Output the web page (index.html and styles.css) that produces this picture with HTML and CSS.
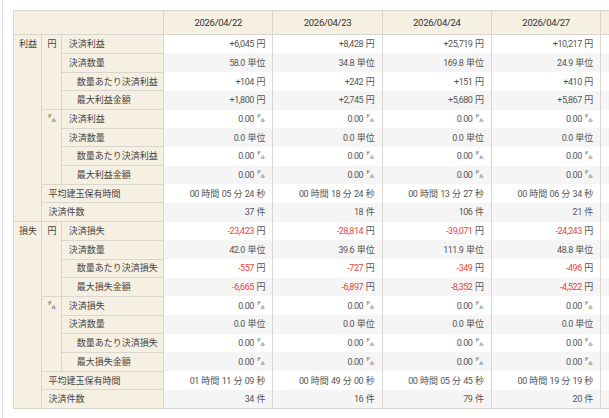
FILE: index.html
```html
<!DOCTYPE html>
<html lang="ja">
<head>
<meta charset="utf-8">
<title>決済集計</title>
<link rel="stylesheet" href="styles.css">
</head>
<body>
<div class="page">
<div class="scroller">
<table class="stats">
<colgroup>
<col class="c-sec"><col class="c-cur"><col class="c-lbl">
<col class="c-day"><col class="c-day"><col class="c-day"><col class="c-day"><col class="c-day">
</colgroup>
<thead>
<tr>
<th colspan="3" class="corner"></th>
<th>2026/04/22</th><th>2026/04/23</th><th>2026/04/24</th><th>2026/04/27</th><th></th>
</tr>
</thead>
<tbody>
<tr class="odd">
<th rowspan="10" class="sec">利益</th>
<th rowspan="4" class="cur">円</th>
<th class="lbl">決済利益</th>
<td>+6,045<span class="u">円</span></td><td>+8,428<span class="u">円</span></td><td>+25,719<span class="u">円</span></td><td>+10,217<span class="u">円</span></td><td></td>
</tr>
<tr class="even">
<th class="lbl">決済数量</th>
<td>58.0<span class="u">単位</span></td><td>34.8<span class="u">単位</span></td><td>169.8<span class="u">単位</span></td><td>24.9<span class="u">単位</span></td><td></td>
</tr>
<tr class="odd">
<th class="lbl sub">数量あたり決済利益</th>
<td>+104<span class="u">円</span></td><td>+242<span class="u">円</span></td><td>+151<span class="u">円</span></td><td>+410<span class="u">円</span></td><td></td>
</tr>
<tr class="even">
<th class="lbl sub">最大利益金額</th>
<td>+1,800<span class="u">円</span></td><td>+2,745<span class="u">円</span></td><td>+5,680<span class="u">円</span></td><td>+5,867<span class="u">円</span></td><td></td>
</tr>
<tr class="odd">
<th rowspan="4" class="cur">㌦</th>
<th class="lbl">決済利益</th>
<td>0.00<span class="u">㌦</span></td><td>0.00<span class="u">㌦</span></td><td>0.00<span class="u">㌦</span></td><td>0.00<span class="u">㌦</span></td><td></td>
</tr>
<tr class="even">
<th class="lbl">決済数量</th>
<td>0.0<span class="u">単位</span></td><td>0.0<span class="u">単位</span></td><td>0.0<span class="u">単位</span></td><td>0.0<span class="u">単位</span></td><td></td>
</tr>
<tr class="odd">
<th class="lbl sub">数量あたり決済利益</th>
<td>0.00<span class="u">㌦</span></td><td>0.00<span class="u">㌦</span></td><td>0.00<span class="u">㌦</span></td><td>0.00<span class="u">㌦</span></td><td></td>
</tr>
<tr class="even">
<th class="lbl sub">最大利益金額</th>
<td>0.00<span class="u">㌦</span></td><td>0.00<span class="u">㌦</span></td><td>0.00<span class="u">㌦</span></td><td>0.00<span class="u">㌦</span></td><td></td>
</tr>
<tr class="odd">
<th colspan="2" class="lbl">平均建玉保有時間</th>
<td>00<span class="u">時間</span> 05<span class="u">分</span> 24<span class="u">秒</span></td><td>00<span class="u">時間</span> 18<span class="u">分</span> 24<span class="u">秒</span></td><td>00<span class="u">時間</span> 13<span class="u">分</span> 27<span class="u">秒</span></td><td>00<span class="u">時間</span> 06<span class="u">分</span> 34<span class="u">秒</span></td><td></td>
</tr>
<tr class="even">
<th colspan="2" class="lbl">決済件数</th>
<td>37<span class="u">件</span></td><td>18<span class="u">件</span></td><td>106<span class="u">件</span></td><td>21<span class="u">件</span></td><td></td>
</tr>

<tr class="odd">
<th rowspan="10" class="sec">損失</th>
<th rowspan="4" class="cur">円</th>
<th class="lbl">決済損失</th>
<td><span class="neg">-23,423</span><span class="u">円</span></td><td><span class="neg">-28,814</span><span class="u">円</span></td><td><span class="neg">-39,071</span><span class="u">円</span></td><td><span class="neg">-24,243</span><span class="u">円</span></td><td></td>
</tr>
<tr class="even">
<th class="lbl">決済数量</th>
<td>42.0<span class="u">単位</span></td><td>39.6<span class="u">単位</span></td><td>111.9<span class="u">単位</span></td><td>48.8<span class="u">単位</span></td><td></td>
</tr>
<tr class="odd">
<th class="lbl sub">数量あたり決済損失</th>
<td><span class="neg">-557</span><span class="u">円</span></td><td><span class="neg">-727</span><span class="u">円</span></td><td><span class="neg">-349</span><span class="u">円</span></td><td><span class="neg">-496</span><span class="u">円</span></td><td></td>
</tr>
<tr class="even">
<th class="lbl sub">最大損失金額</th>
<td><span class="neg">-6,665</span><span class="u">円</span></td><td><span class="neg">-6,897</span><span class="u">円</span></td><td><span class="neg">-8,352</span><span class="u">円</span></td><td><span class="neg">-4,522</span><span class="u">円</span></td><td></td>
</tr>
<tr class="odd">
<th rowspan="4" class="cur">㌦</th>
<th class="lbl">決済損失</th>
<td>0.00<span class="u">㌦</span></td><td>0.00<span class="u">㌦</span></td><td>0.00<span class="u">㌦</span></td><td>0.00<span class="u">㌦</span></td><td></td>
</tr>
<tr class="even">
<th class="lbl">決済数量</th>
<td>0.0<span class="u">単位</span></td><td>0.0<span class="u">単位</span></td><td>0.0<span class="u">単位</span></td><td>0.0<span class="u">単位</span></td><td></td>
</tr>
<tr class="odd">
<th class="lbl sub">数量あたり決済損失</th>
<td>0.00<span class="u">㌦</span></td><td>0.00<span class="u">㌦</span></td><td>0.00<span class="u">㌦</span></td><td>0.00<span class="u">㌦</span></td><td></td>
</tr>
<tr class="even">
<th class="lbl sub">最大損失金額</th>
<td>0.00<span class="u">㌦</span></td><td>0.00<span class="u">㌦</span></td><td>0.00<span class="u">㌦</span></td><td>0.00<span class="u">㌦</span></td><td></td>
</tr>
<tr class="odd">
<th colspan="2" class="lbl">平均建玉保有時間</th>
<td>01<span class="u">時間</span> 11<span class="u">分</span> 09<span class="u">秒</span></td><td>00<span class="u">時間</span> 49<span class="u">分</span> 00<span class="u">秒</span></td><td>00<span class="u">時間</span> 05<span class="u">分</span> 45<span class="u">秒</span></td><td>00<span class="u">時間</span> 19<span class="u">分</span> 19<span class="u">秒</span></td><td></td>
</tr>
<tr class="even last">
<th colspan="2" class="lbl">決済件数</th>
<td>34<span class="u">件</span></td><td>16<span class="u">件</span></td><td>79<span class="u">件</span></td><td>20<span class="u">件</span></td><td></td>
</tr>
</tbody>
</table>
</div>
</div>
</body>
</html>
```

FILE: styles.css
```css
html, body {
  margin: 0;
  padding: 0;
  background: #ffffff;
}

body {
  font-family: Roboto, "Noto Sans CJK JP", sans-serif;
  font-size: 9px;
  color: #444444;
}

.page {
  height: 418px;
  margin-left: 2px;
  border-left: 1px solid #e0e0e0;
  overflow: hidden;
}

.scroller {
  padding: 10px 0 0 10px;
}

.stats {
  border-collapse: collapse;
  table-layout: fixed;
  width: 696px;
}

.c-sec { width: 27.5px; }
.c-cur { width: 20.3px; }
.c-lbl { width: 102.3px; }
.c-day { width: 109.3px; }

.stats thead th {
  height: 23.3px;
  padding: 0;
  background: #f6f0e3;
  border: 1px solid #d9d6d0;
  font-weight: normal;
  font-size: 9.5px;
  color: #333333;
  text-align: center;
  letter-spacing: -0.3px;
}

.stats tbody tr {
  height: 18.7px;
}

.stats tbody th {
  background: #f6f0e3;
  border: 1px solid #d9d6d0;
  font-weight: normal;
  text-align: left;
  padding: 0 0 0 7px;
  line-height: 12px;
  white-space: nowrap;
  color: #444444;
}

.stats tbody th.sec {
  vertical-align: top;
  padding: 3px 0 0 5px;
}

.stats tbody th.cur {
  vertical-align: top;
  padding: 3px 0 0 6px;
}

.stats tbody th.sub {
  padding-left: 15px;
}

.stats td {
  padding: 0 7px 0 0;
  line-height: 12px;
  text-align: right;
  white-space: nowrap;
  border-left: 1px solid #d9d6d0;
  border-right: 1px solid #d9d6d0;
  letter-spacing: -0.45px;
  word-spacing: 0.5px;
  color: #555555;
}

.stats .u {
  letter-spacing: 0;
  margin-left: 2.5px;
}

.stats tr.odd td { background: #ffffff; }
.stats tr.even td { background: #f5f5f5; }
.stats tr.last td { border-bottom: 1px solid #d9d6d0; }

.neg {
  color: #e8453c;
}
```
